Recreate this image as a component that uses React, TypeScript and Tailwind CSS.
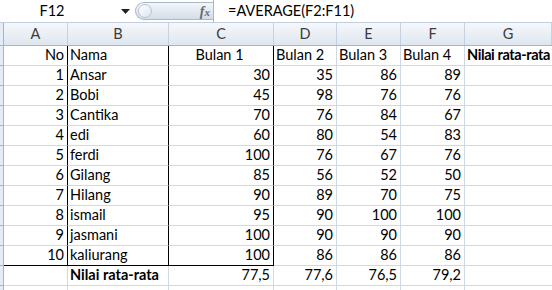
import React from "react";

const font = { fontFamily: "Lato, 'Open Sans', sans-serif" };

interface Row {
  no: string;
  nama: string;
  values: string[];
  bold?: boolean;
}

const rows: Row[] = [
  { no: "No", nama: "Nama", values: ["Bulan 1", "Bulan 2", "Bulan 3", "Bulan 4", "Nilai rata-rata"] },
  { no: "1", nama: "Ansar", values: ["30", "35", "86", "89"] },
  { no: "2", nama: "Bobi", values: ["45", "98", "76", "76"] },
  { no: "3", nama: "Cantika", values: ["70", "76", "84", "67"] },
  { no: "4", nama: "edi", values: ["60", "80", "54", "83"] },
  { no: "5", nama: "ferdi", values: ["100", "76", "67", "76"] },
  { no: "6", nama: "Gilang", values: ["85", "56", "52", "50"] },
  { no: "7", nama: "Hilang", values: ["90", "89", "70", "75"] },
  { no: "8", nama: "ismail", values: ["95", "90", "100", "100"] },
  { no: "9", nama: "jasmani", values: ["100", "90", "90", "90"] },
  { no: "10", nama: "kaliurang", values: ["100", "86", "86", "86"] },
  { no: "", nama: "Nilai rata-rata", values: ["77,5", "77,6", "76,5", "79,2"], bold: true },
  { no: "", nama: "", values: [] },
];

const headers = [
  { label: "A", w: "w-[64px]" },
  { label: "B", w: "w-[101px]" },
  { label: "C", w: "w-[105px]" },
  { label: "D", w: "w-[63px]" },
  { label: "E", w: "w-[64px]" },
  { label: "F", w: "w-[64px]" },
  { label: "G", w: "w-[87px]" },
];

function FormulaBar() {
  return (
    <div className="flex h-[23px] items-stretch border-b border-[#c3cfdd] bg-white">
      <div className="flex w-[135px] items-center">
        <span className="w-[104px] text-center text-[14.5px] text-black">F12</span>
        <svg width="9" height="5" viewBox="0 0 9 5" className="ml-[17px]">
          <path d="M0 0H9L4.5 5Z" fill="#222" />
        </svg>
      </div>
      <div className="my-[2px] flex w-[78px] items-center justify-between rounded-l-full border border-r-0 border-[#a9b8ca] bg-gradient-to-b from-[#f3f6fa] to-[#d4dde9] pl-[2px] pr-[3px]">
        <div className="h-[14px] w-[14px] rounded-full border border-[#b7c4d4] bg-gradient-to-br from-white to-[#dfe6ef]" />
        <span
          className="text-[14px] font-bold italic text-[#6a6a6a]"
          style={{ fontFamily: "'Liberation Serif', serif" }}
        >
          f<span className="text-[11px]">x</span>
        </span>
      </div>
      <div className="flex flex-1 items-center border-l border-[#a9b8ca] pl-[14px] text-[14.5px] text-black">
        =AVERAGE(F2:F11)
      </div>
    </div>
  );
}

function HeaderRow() {
  return (
    <div className="flex h-[23px] border-b border-[#9eb6ce] bg-gradient-to-b from-[#f5f8fb] to-[#dfe6ef]">
      <div className="w-[4px] border-r border-[#9eb6ce] bg-[#e4ecf7]" />
      {headers.map((h) => (
        <div
          key={h.label}
          className={`${h.w} flex shrink-0 items-center justify-center border-r border-[#c5d1de] text-[14.5px] text-[#3c3c3c]`}
        >
          {h.label}
        </div>
      ))}
    </div>
  );
}

function DataRow({ row, index }: { row: Row; index: number }) {
  const boxed = index <= 10;
  const lastBoxed = index === 10;
  const isTitle = index === 0;
  const bottom = lastBoxed ? "border-b-black" : "border-b-[#d0d7e5]";
  const boxRight = boxed ? "border-r-black" : "border-r-[#d0d7e5]";

  return (
    <div className="flex h-[20px] text-[14.5px] leading-none text-black">
      <div className="w-[4px] shrink-0 border-r border-b border-[#9eb6ce] bg-[#e4ecf7]" />
      <div className={`flex w-[64px] shrink-0 items-center justify-end border-r border-b pr-[3px] ${boxRight} ${bottom}`}>
        {row.no}
      </div>
      <div
        className={`flex w-[101px] shrink-0 items-center border-r border-b pl-[2px] ${boxRight} ${bottom} ${row.bold ? "font-bold" : ""}`}
      >
        {row.nama}
      </div>
      <div
        className={`flex w-[105px] shrink-0 items-center border-r border-b pr-[3px] ${boxRight} ${bottom} ${isTitle ? "justify-center" : "justify-end"}`}
      >
        {row.values[0]}
      </div>
      {[1, 2, 3].map((i) => (
        <div
          key={i}
          className={`flex ${i === 1 ? "w-[63px]" : "w-[64px]"} shrink-0 items-center border-r border-b border-r-[#d0d7e5] border-b-[#d0d7e5] ${isTitle ? "justify-start pl-[2px]" : "justify-end pr-[3px]"}`}
        >
          {row.values[i]}
        </div>
      ))}
      <div className="flex w-[87px] shrink-0 items-center whitespace-nowrap border-b border-b-[#d0d7e5] pl-[2px] font-bold tracking-[-0.4px]">
        {row.values[4]}
      </div>
    </div>
  );
}

export default function App() {
  return (
    <main className="h-[290px] w-[552px] overflow-hidden bg-white" style={font}>
      <FormulaBar />
      <HeaderRow />
      {rows.map((row, index) => (
        <DataRow key={index} row={row} index={index} />
      ))}
    </main>
  );
}
